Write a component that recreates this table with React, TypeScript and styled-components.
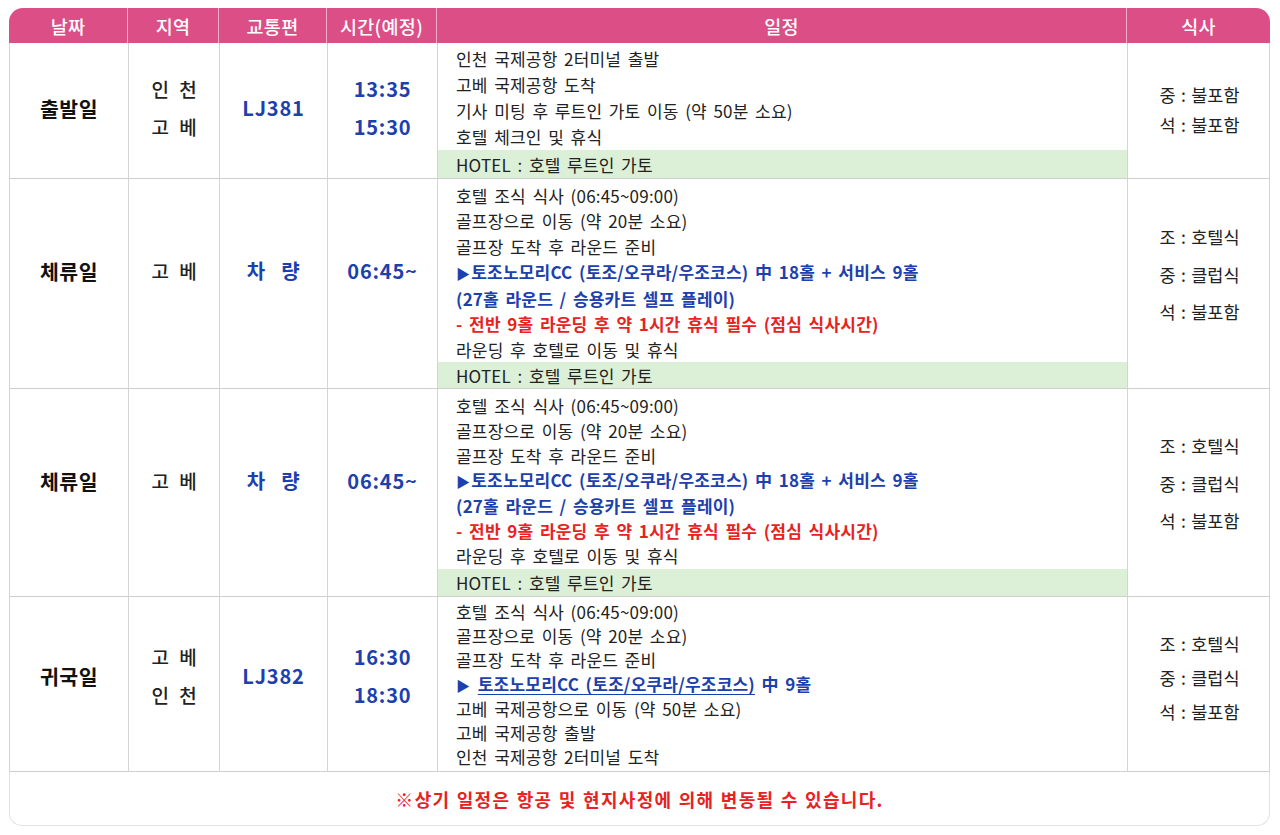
import React from "react";
import styled, { createGlobalStyle } from "styled-components";

const Global = createGlobalStyle`
  * { box-sizing: border-box; }
  html, body { margin: 0; padding: 0; background: #ffffff; }
  body { font-family: "Noto Sans CJK KR", "Noto Sans", sans-serif; color: #222; }
`;

const COLS = "119px 91px 108px 110px 690px 143px";

const Page = styled.div`
  padding: 8px 10px 9px 9px;
  width: 1280px;
`;

const Header = styled.div`
  display: grid;
  grid-template-columns: ${COLS};
  height: 35px;
  background: #dc4e86;
  border-radius: 14px 14px 0 0;
  overflow: hidden;
`;

const HeadCell = styled.div`
  display: flex;
  align-items: center;
  justify-content: center;
  color: #fff;
  font-size: 18.5px;
  font-weight: 500;
  letter-spacing: 0.3px;
  border-right: 1px solid rgba(255, 255, 255, 0.55);
  &:last-child { border-right: none; }
`;

const Row = styled.div<{ $h: number }>`
  display: grid;
  grid-template-columns: ${COLS};
  height: ${(p) => p.$h}px;
  border-left: 1px solid #d4d4d4;
  border-right: 1px solid #d4d4d4;
  border-bottom: 1px solid #cfcfcf;
`;

const Cell = styled.div<{ $pb: number }>`
  display: flex;
  flex-direction: column;
  align-items: center;
  justify-content: center;
  padding-bottom: ${(p) => p.$pb}px;
  border-right: 1px solid #d4d4d4;
  &:last-child { border-right: none; }
`;

const DayLabel = styled.div`
  font-size: 20.5px;
  font-weight: 700;
  color: #111;
  letter-spacing: 0.5px;
`;

const Region = styled.div`
  font-size: 19px;
  font-weight: 500;
  color: #222;
  line-height: 38px;
  word-spacing: 6px;
`;

const BlueBig = styled.div`
  font-size: 20px;
  font-weight: 600;
  color: #1c40ad;
  line-height: 38px;
  letter-spacing: 0.8px;
  word-spacing: 10px;
`;

const Schedule = styled.div`
  display: flex;
  flex-direction: column;
  border-right: 1px solid #d4d4d4;
`;

const Lines = styled.div<{ $lh: number; $pt: number }>`
  padding: ${(p) => p.$pt}px 0 0 18px;
  line-height: ${(p) => p.$lh}px;
  font-size: 17px;
  letter-spacing: 0.2px;
  word-spacing: 2.5px;
`;

const Line = styled.div<{ $tone?: "blue" | "red" }>`
  color: ${(p) => (p.$tone === "blue" ? "#1c40ad" : p.$tone === "red" ? "#e8221e" : "#222")};
  font-weight: ${(p) => (p.$tone ? 600 : 400)};
  white-space: nowrap;
`;

const Tri = styled.span`
  font-size: 14px;
  margin-right: 1px;
`;

const Under = styled.span`
  text-decoration: underline;
  text-underline-offset: 3px;
`;

const Hotel = styled.div`
  margin-top: auto;
  flex: 1;
  max-height: 28px;
  display: flex;
  align-items: center;
  padding-left: 18px;
  background: #dcefd7;
  font-size: 17px;
  letter-spacing: 0.2px;
  word-spacing: 2.5px;
  color: #222;
`;

const Meals = styled.div<{ $gap: number }>`
  display: flex;
  flex-direction: column;
  gap: ${(p) => p.$gap}px;
  font-size: 17.5px;
  color: #222;
  line-height: 1;
  word-spacing: 1.5px;
`;

const Footer = styled.div`
  height: 54px;
  display: flex;
  align-items: center;
  justify-content: center;
  border: 1px solid #e2e2e2;
  border-top: none;
  border-radius: 0 0 13px 13px;
  color: #e8221e;
  font-size: 18px;
  font-weight: 700;
  letter-spacing: 1.3px;
  word-spacing: 1px;
`;

type Tone = "blue" | "red" | undefined;
type L = { t: React.ReactNode; tone?: Tone };

type DayRow = {
  h: number;
  day: string;
  region: string[];
  trans: string[];
  times: string[];
  lines: L[];
  lh: number;
  pt: number;
  hotel: boolean;
  meals: string[];
  gap: number;
  lift: number;
  mealLift: number;
};

const golf18: L[] = [
  { t: "호텔 조식 식사 (06:45~09:00)" },
  { t: "골프장으로 이동 (약 20분 소요)" },
  { t: "골프장 도착 후 라운드 준비" },
  {
    t: (
      <>
        <Tri>▶</Tri>토조노모리CC (토조/오쿠라/우조코스) 中 18홀 + 서비스 9홀
      </>
    ),
    tone: "blue",
  },
  { t: "(27홀 라운드 / 승용카트 셀프 플레이)", tone: "blue" },
  { t: "- 전반 9홀 라운딩 후 약 1시간 휴식 필수 (점심 식사시간)", tone: "red" },
  { t: "라운딩 후 호텔로 이동 및 휴식" },
];

const rows: DayRow[] = [
  {
    h: 136,
    day: "출발일",
    region: ["인 천", "고 베"],
    trans: ["LJ381"],
    times: ["13:35", "15:30"],
    lines: [
      { t: "인천 국제공항 2터미널 출발" },
      { t: "고베 국제공항 도착" },
      { t: "기사 미팅 후 루트인 가토 이동 (약 50분 소요)" },
      { t: "호텔 체크인 및 휴식" },
    ],
    lh: 26,
    pt: 3,
    hotel: true,
    meals: ["중 : 불포함", "석 : 불포함"],
    gap: 13,
    lift: 5,
    mealLift: 2,
  },
  {
    h: 210,
    day: "체류일",
    region: ["고 베"],
    trans: ["차 량"],
    times: ["06:45~"],
    lines: golf18,
    lh: 25.3,
    pt: 4,
    hotel: true,
    meals: ["조 : 호텔식", "중 : 클럽식", "석 : 불포함"],
    gap: 20,
    lift: 26,
    mealLift: 18,
  },
  {
    h: 208,
    day: "체류일",
    region: ["고 베"],
    trans: ["차 량"],
    times: ["06:45~"],
    lines: golf18,
    lh: 24.8,
    pt: 5,
    hotel: true,
    meals: ["조 : 호텔식", "중 : 클럽식", "석 : 불포함"],
    gap: 20,
    lift: 24,
    mealLift: 18,
  },
  {
    h: 175,
    day: "귀국일",
    region: ["고 베", "인 천"],
    trans: ["LJ382"],
    times: ["16:30", "18:30"],
    lines: [
      { t: "호텔 조식 식사 (06:45~09:00)" },
      { t: "골프장으로 이동 (약 20분 소요)" },
      { t: "골프장 도착 후 라운드 준비" },
      {
        t: (
          <>
            <Tri>▶</Tri> <Under>토조노모리CC (토조/오쿠라/우조코스)</Under> 中 9홀
          </>
        ),
        tone: "blue",
      },
      { t: "고베 국제공항으로 이동 (약 50분 소요)" },
      { t: "고베 국제공항 출발" },
      { t: "인천 국제공항 2터미널 도착" },
    ],
    lh: 24,
    pt: 3,
    hotel: false,
    meals: ["조 : 호텔식", "중 : 클럽식", "석 : 불포함"],
    gap: 16.5,
    lift: 17,
    mealLift: 12,
  },
];

const heads = ["날짜", "지역", "교통편", "시간(예정)", "일정", "식사"];

export default function App() {
  return (
    <>
      <Global />
      <Page>
        <Header>
          {heads.map((h) => (
            <HeadCell key={h}>{h}</HeadCell>
          ))}
        </Header>
        {rows.map((r, i) => (
          <Row key={i} $h={r.h}>
            <Cell $pb={r.lift}>
              <DayLabel>{r.day}</DayLabel>
            </Cell>
            <Cell $pb={r.lift}>
              {r.region.map((x) => (
                <Region key={x}>{x}</Region>
              ))}
            </Cell>
            <Cell $pb={r.lift}>
              {r.trans.map((x) => (
                <BlueBig key={x}>{x}</BlueBig>
              ))}
            </Cell>
            <Cell $pb={r.lift}>
              {r.times.map((x) => (
                <BlueBig key={x}>{x}</BlueBig>
              ))}
            </Cell>
            <Schedule>
              <Lines $lh={r.lh} $pt={r.pt}>
                {r.lines.map((l, j) => (
                  <Line key={j} $tone={l.tone}>
                    {l.t}
                  </Line>
                ))}
              </Lines>
              {r.hotel && <Hotel>HOTEL : 호텔 루트인 가토</Hotel>}
            </Schedule>
            <Cell $pb={r.mealLift}>
              <Meals $gap={r.gap}>
                {r.meals.map((m) => (
                  <div key={m}>{m}</div>
                ))}
              </Meals>
            </Cell>
          </Row>
        ))}
        <Footer>※상기 일정은 항공 및 현지사정에 의해 변동될 수 있습니다.</Footer>
      </Page>
    </>
  );
}
